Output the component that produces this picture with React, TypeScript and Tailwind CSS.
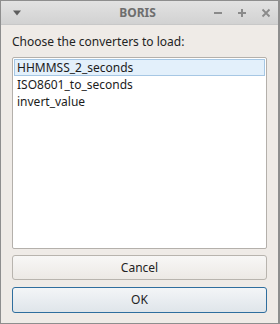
import React, { useState } from 'react';

const converters = ['HHMMSS_2_seconds', 'ISO8601_to_seconds', 'invert_value'];

const App: React.FC = () => {
  const [selected, setSelected] = useState(0);

  return (
    <div
      className="w-[280px] h-[324px] flex flex-col bg-[#efebe7] border border-[#8e8e8e] border-r-2 overflow-hidden"
      style={{ fontFamily: '"Noto Sans", "Open Sans", sans-serif' }}
    >
      {/* title bar */}
      <div className="h-[24px] flex items-center pl-[10px] pr-[7px] bg-gradient-to-b from-[#e2e2e2] to-[#d2d2d2] border-b border-[#c8c8c8] shrink-0">
        <svg width="10" height="6" viewBox="0 0 10 6" className="ml-[1px]">
          <path d="M1 0.5 L9 0.5 L5 5.5 Z" fill="#5e5e5e" />
        </svg>
        <div className="flex-1 text-center text-[12px] font-bold text-[#6e6e6e] pl-[40px]">BORIS</div>
        <div className="flex items-center gap-[14px]">
          <svg width="10" height="10" viewBox="0 0 10 10">
            <rect x="1" y="4" width="8" height="2" fill="#8a8a8a" />
          </svg>
          <svg width="10" height="10" viewBox="0 0 10 10">
            <rect x="1" y="4" width="8" height="2" fill="#8a8a8a" />
            <rect x="4" y="1" width="2" height="8" fill="#8a8a8a" />
          </svg>
          <svg width="10" height="10" viewBox="0 0 10 10">
            <path d="M1.5 1.5 L8.5 8.5 M8.5 1.5 L1.5 8.5" stroke="#8a8a8a" strokeWidth="1.8" />
          </svg>
        </div>
      </div>

      {/* body */}
      <div className="flex-1 flex flex-col px-[11px] pt-[8px] pb-[10px]">
        <div className="text-[12px] text-[#232323] leading-[18px]">Choose the converters to load:</div>
        <div className="mt-[6px] flex-1 bg-white border border-[#b4b0ab] rounded-[2px] p-[1px]">
          {converters.map((c, i) => (
            <div
              key={c}
              onClick={() => setSelected(i)}
              className={`h-[17px] leading-[15px] pl-[2px] text-[12px] text-[#1c1c1c] border ${
                selected === i ? 'bg-[#e3f0fb] border-[#a6c7e4]' : 'border-transparent'
              }`}
            >
              {c}
            </div>
          ))}
        </div>
        <button className="mt-[6px] h-[25px] rounded-[3px] border border-[#b8b4ae] bg-gradient-to-b from-[#f8f7f6] to-[#ece9e5] text-[12px] text-[#232323]">
          Cancel
        </button>
        <button className="mt-[7px] h-[26px] rounded-[3px] border border-[#2f6e9e] bg-gradient-to-b from-[#f3f5f7] to-[#dfe5ea] text-[12px] text-[#232323]">
          OK
        </button>
      </div>
    </div>
  );
};

export default App;
